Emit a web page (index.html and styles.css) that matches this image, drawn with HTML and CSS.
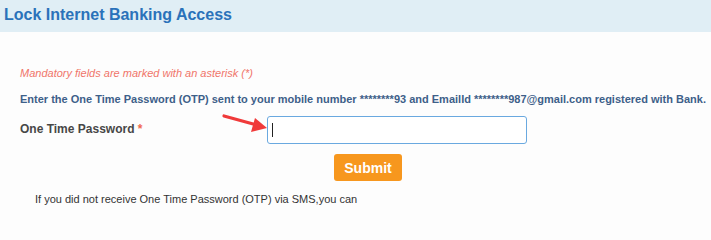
FILE: index.html
```html
<!DOCTYPE html>
<html>
<head>
<meta charset="utf-8">
<link rel="stylesheet" href="styles.css">
</head>
<body>
<div class="header"><h1 class="title">Lock Internet Banking Access</h1></div>
<div class="content">
  <p class="mandatory">Mandatory fields are marked with an asterisk (*)</p>
  <p class="info">Enter the One Time Password (OTP) sent to your mobile number ********93 and EmailId ********987@gmail.com registered with Bank.</p>
  <div class="row">
    <label class="label">One Time Password <span class="star">*</span></label>
    <div class="field">
      <svg class="arrow" width="50" height="22" viewBox="0 0 50 22">
        <path d="M2 3 L33 11.5" stroke="#f03a3a" stroke-width="3.2" stroke-linecap="round" fill="none"/>
        <path d="M45 15 L29 19 L33 5 Z" fill="#f03a3a"/>
      </svg>
      <div class="input"><span class="caret"></span></div>
    </div>
  </div>
  <div class="actions"><button class="submit">Submit</button></div>
  <p class="note">If you did not receive One Time Password (OTP) via SMS,you can</p>
</div>
</body>
</html>
```
FILE: styles.css
```css
html, body { margin: 0; padding: 0; }
html { height: 206px; overflow: hidden; }
body {
  background: #fdfdfd;
  font-family: "Liberation Sans", Arial, sans-serif;
  width: 711px;
  height: 206px;
  overflow: hidden;
}
.header {
  background: #e0eef5;
  height: 32px;
  padding: 0 4px;
}
.title {
  margin: 0;
  font-size: 16px;
  line-height: 30px;
  font-weight: bold;
  color: #2a72ba;
}
.content { padding: 0 0 0 20px; }
.mandatory {
  margin: 34px 0 0 0;
  font-size: 11px;
  line-height: 14px;
  font-style: italic;
  color: #f0756a;
}
.info {
  margin: 12px 0 0 0;
  font-size: 11px;
  line-height: 14px;
  font-weight: bold;
  color: #3d6089;
}
.row {
  display: flex;
  align-items: center;
  margin-top: 10px;
}
.label {
  flex: 0 0 247px;
  font-size: 12px;
  font-weight: bold;
  color: #474747;
  margin-top: -3px;
}
.star { color: #f06a50; }
.field { position: relative; }
.arrow { position: absolute; left: -45px; top: -3px; }
.input {
  border: 1px solid #6aa9e0;
  border-radius: 3px;
  background: #fff;
  display: flex;
  align-items: center;
  padding-left: 4px;
  box-sizing: border-box;
  width: 260px;
  height: 28px;
}
.caret { width: 1px; height: 14px; background: #222; }
.actions { padding-left: 314px; margin-top: 10px; }
.submit {
  width: 68px;
  height: 27px;
  border: none;
  border-radius: 3px;
  background: #f7971e;
  color: #fff;
  font-family: "Liberation Sans", Arial, sans-serif;
  font-weight: bold;
  font-size: 14px;
  padding: 0;
}
.note {
  margin: 11px 0 0 15px;
  font-size: 11px;
  line-height: 14px;
  color: #333;
}
```
